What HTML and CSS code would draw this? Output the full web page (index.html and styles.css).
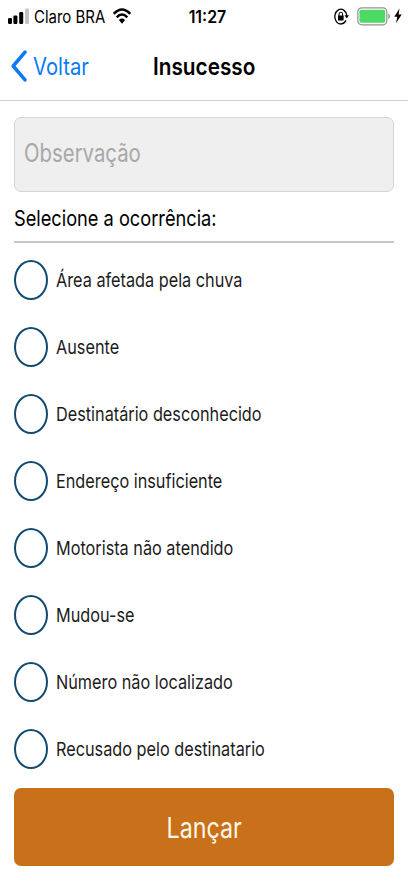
FILE: index.html
```html
<!DOCTYPE html>
<html lang="pt-BR">
<head>
<meta charset="utf-8">
<title>Insucesso</title>
<link rel="stylesheet" href="styles.css">
</head>
<body>
<div class="status">
  <div class="status-left">
    <svg class="signal" width="22" height="16" viewBox="0 0 22 16"><rect x="0" y="10" width="4" height="6" rx="1.2"/><rect x="5.4" y="7.5" width="4" height="8.5" rx="1.2"/><rect x="11.2" y="4" width="4" height="12" rx="1.2"/><rect x="17" y="0.5" width="4" height="15.5" rx="1.2" fill="#c4c4c4"/></svg>
    <span class="carrier"><span class="t">Claro BRA</span></span>
    <svg class="wifi" width="18" height="16" viewBox="0 0 18 16"><g fill="none" stroke="#000" stroke-width="2.5"><path d="M.8 5.8Q9-2.8 17.2 5.8"/><path d="M3.7 9.3Q9 3.7 14.3 9.3"/></g><path d="M5.9 11.9Q9 9 12.1 11.9L9 15.8z"/></svg>
  </div>
  <div class="clock"><span class="t">11:27</span></div>
  <div class="status-right">
    <svg width="15" height="17" viewBox="0 0 15 17"><path d="M12 12.4A6 7.4 0 1 1 12.8 7.6" fill="none" stroke="#000" stroke-width="1.3"/><path d="M10.5 7.3h4.4l-2.1 3.3z"/><rect x="4" y="7.6" width="5.6" height="5" rx=".6"/><path d="M5 8V6.2a1.8 2 0 0 1 3.6 0V8" fill="none" stroke="#000" stroke-width="1.1"/></svg>
    <svg class="battery" width="34" height="19" viewBox="0 0 34 19"><rect x=".8" y=".8" width="29" height="17" rx="4" fill="#fff" stroke="#929292" stroke-width="1.2"/><rect x="2.4" y="2.8" width="25.8" height="13" rx="1.8" fill="#4cd964"/><path d="M31.3 6.3q1.7.8 1.7 3t-1.7 3z" fill="#929292"/></svg>
    <svg class="bolt" width="8" height="16" viewBox="0 0 8 16"><path d="M5.5.5.3 8.8h3L2 15.3 7.7 6.6H4.6z"/></svg>
  </div>
</div>
<header class="nav">
  <a class="back"><svg width="17" height="33" viewBox="0 0 17 33"><path d="M15 2.2 3.2 16l11.8 13.8" fill="none" stroke="#087bf5" stroke-width="3.5" stroke-linecap="round" stroke-linejoin="round"/></svg><span class="back-label"><span class="t">Voltar</span></span></a>
  <h1 class="title"><span class="t">Insucesso</span></h1>
</header>
<main class="content">
  <div class="note"><span class="t">Observação</span></div>
  <h2 class="prompt"><span class="t">Selecione a ocorrência:</span></h2>
  <ul class="options">
    <li><i class="radio"></i><span class="t">Área afetada pela chuva</span></li>
    <li><i class="radio"></i><span class="t">Ausente</span></li>
    <li><i class="radio"></i><span class="t">Destinatário desconhecido</span></li>
    <li><i class="radio"></i><span class="t">Endereço insuficiente</span></li>
    <li><i class="radio"></i><span class="t">Motorista não atendido</span></li>
    <li><i class="radio"></i><span class="t">Mudou-se</span></li>
    <li><i class="radio"></i><span class="t">Número não localizado</span></li>
    <li><i class="radio"></i><span class="t">Recusado pelo destinatario</span></li>
  </ul>
  <button class="submit"><span class="t">Lançar</span></button>
</main>
</body>
</html>
```
FILE: styles.css
```css
* { box-sizing: border-box; }
body { margin: 0; width: 408px; height: 883px; overflow: hidden; background: #fff; color: #000; font-family: Inter, "Liberation Sans", sans-serif; }
svg { display: block; flex: none; }
.t { display: inline-block; white-space: nowrap; transform: scaleX(.843); transform-origin: left center; }
.status { display: grid; grid-template-columns: 180px 54px 1fr; height: 32px; align-items: center; }
.status-left { display: flex; align-items: center; padding-left: 8px; }
.carrier { width: 73px; margin-left: 4px; font-size: 17.3px; }
.carrier .t { transform: scaleX(.865); }
.wifi { margin-left: 6px; }
.clock { display: flex; justify-content: center; font-size: 17.3px; font-weight: 600; }
.clock .t, .title .t, .submit .t { transform-origin: center; }
.clock .t { transform: scaleX(.92); }
.status-right { display: flex; align-items: center; padding-left: 100px; }
.battery { margin-left: 8px; }
.bolt { margin-left: 3px; }
.nav { display: grid; grid-template-columns: 120px 168px 120px; height: 69px; align-items: center; border-bottom: 1px solid #cfcfcf; }
.back { display: flex; align-items: center; padding-left: 10px; color: #087bf5; font-size: 24px; }
.back-label { margin-left: 6px; }
.title { margin: 0; display: flex; justify-content: center; font-size: 24px; font-weight: 600; }
.title .t { transform: scaleX(.864); }
.content { padding: 16px 14px 0; }
.note { height: 75px; display: flex; align-items: center; padding: 0 0 3px 9px; border: 1px solid #d5d5d5; border-radius: 7px; background: #efefef; color: #a8a8a8; font-size: 25px; }
.note .t { transform: scaleX(.814); }
.prompt { margin: 0; height: 51px; display: flex; align-items: center; padding-top: 3px; border-bottom: 2px solid #c8c8c8; font-size: 22px; font-weight: 400; }
.prompt .t { transform: scaleX(.828); }
.options { margin: 0; padding: 3px 0 0; list-style: none; color: #1c1c1c; font-size: 19.3px; }
.options li { display: flex; align-items: center; height: 67px; }
.radio { width: 34px; height: 40px; margin-right: 8px; border: 2px solid #124a70; border-radius: 50%; flex: none; }
.submit { display: flex; align-items: center; justify-content: center; width: 380px; height: 78px; margin-top: 6px; padding: 0; border: 0; border-radius: 7px; background: #c8701a; color: #fff8ea; font: 400 28.5px Inter, "Liberation Sans", sans-serif; }
.submit .t { transform: scaleX(.815); }
```
